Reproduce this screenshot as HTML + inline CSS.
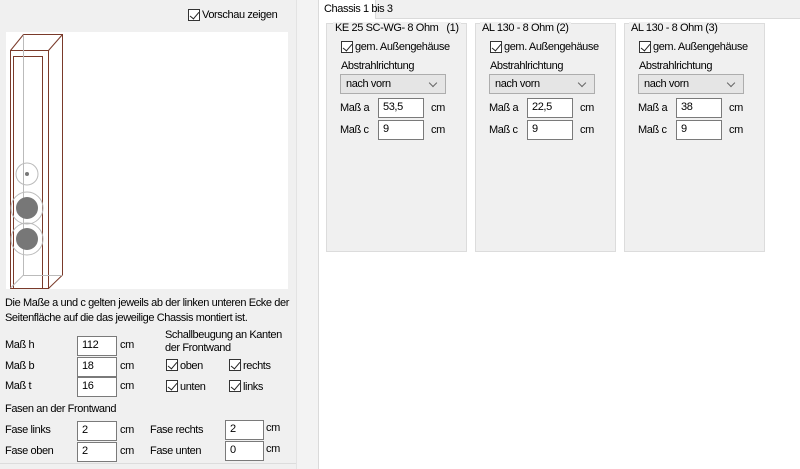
<!DOCTYPE html>
<html><head><meta charset="utf-8"><style>
body{margin:0;width:800px;height:469px;overflow:hidden;background:#fff;font-family:"Liberation Sans",sans-serif;font-size:11px;letter-spacing:-0.4px;color:#000;position:relative}
.a{position:absolute;white-space:nowrap}
.in{position:absolute;background:#fff;border:1px solid #7a7a7a;box-sizing:border-box;height:20px;padding:2px 0 0 4px}
.cb{position:absolute;width:12px;height:12px;border:1px solid #333;background:#fff;box-sizing:border-box}
.cb:after{content:"";position:absolute;left:3px;top:0px;width:4px;height:8px;border:solid #222;border-width:0 1.3px 1.3px 0;transform:rotate(40deg)}
.grp{position:absolute;top:23px;width:141px;height:229px;background:#f0f0f0;border:1px solid #dcdcdc;box-sizing:border-box}
.dd{position:absolute;left:13px;top:50px;width:106px;height:20px;background:#e5e5e5;border:1px solid #adadad;box-sizing:border-box;padding:3px 0 0 5px}
.dd:after{content:"";position:absolute;right:9px;top:5px;width:5px;height:5px;border:solid #666;border-width:0 1px 1px 0;transform:rotate(45deg)}
</style></head><body>
<div class="a" style="left:0;top:0;width:296px;height:469px;background:#f0f0f0;border-right:1px solid #e3e3e3"></div>
<div class="a" style="left:297px;top:0;width:21px;height:469px;background:#f3f3f3;border-right:1px solid #dadada"></div>
<div class="a" style="left:319px;top:0;width:481px;height:18px;background:#f0f0f0;border-bottom:1px solid #dadada"></div>
<div class="a" style="left:318px;top:0;width:58px;height:19px;background:#fff;border:1px solid #dadada;border-top:none;border-bottom:none;padding:3px 0 0 5px;box-sizing:border-box">Chassis 1 bis 3</div>

<div class="cb" style="left:188px;top:9px"></div><div class="a" style="left:202px;top:9px">Vorschau zeigen</div>
<div class="a" style="left:6px;top:32px;width:282px;height:257px;background:#fff"></div>
<svg class="a" style="left:0;top:0" width="80" height="300">
<g fill="none" stroke="#7a3a2a" stroke-width="1">
<rect x="10.5" y="50.5" width="38" height="238"/>
<line x1="13.5" y1="56" x2="13.5" y2="289"/><line x1="42.5" y1="56" x2="42.5" y2="289"/>
<line x1="13" y1="56.5" x2="42" y2="56.5"/>
<line x1="10.5" y1="50.5" x2="23.5" y2="34.5"/><line x1="48.5" y1="50.5" x2="62.5" y2="34.5"/>
<line x1="23.5" y1="34.5" x2="62.5" y2="34.5"/><line x1="62.5" y1="34" x2="62.5" y2="275"/>
<line x1="48.5" y1="288.5" x2="62.5" y2="275"/>
</g>
<g fill="none" stroke="#bbb" stroke-width="1">
<line x1="23.5" y1="35" x2="23.5" y2="275"/><line x1="23" y1="275.5" x2="62" y2="275.5"/><line x1="10.5" y1="288" x2="23.5" y2="275"/>
<circle cx="27" cy="174" r="11"/><circle cx="27" cy="208" r="16"/><circle cx="27" cy="239" r="16"/>
</g>
<circle cx="27" cy="174" r="2" fill="#777"/><circle cx="27" cy="208" r="11" fill="#777"/><circle cx="27" cy="239" r="11" fill="#777"/>
</svg>
<div class="a" style="left:5px;top:296px;line-height:15px">Die Maße a und c gelten jeweils ab der linken unteren Ecke der<br>Seitenfläche auf die das jeweilige Chassis montiert ist.</div>
<div class="a" style="left:5px;top:339px">Maß h</div><div class="in" style="left:77px;top:336px;width:40px">112</div><div class="a" style="left:120px;top:339px">cm</div>
<div class="a" style="left:5px;top:360px">Maß b</div><div class="in" style="left:77px;top:357px;width:40px">18</div><div class="a" style="left:120px;top:360px">cm</div>
<div class="a" style="left:5px;top:380px">Maß t</div><div class="in" style="left:77px;top:377px;width:40px">16</div><div class="a" style="left:120px;top:380px">cm</div>
<div class="a" style="left:165px;top:329px;line-height:13px">Schallbeugung an Kanten<br>der Frontwand</div>
<div class="cb" style="left:166px;top:359px"></div><div class="a" style="left:180px;top:360px">oben</div>
<div class="cb" style="left:229px;top:359px"></div><div class="a" style="left:243px;top:360px">rechts</div>
<div class="cb" style="left:166px;top:380px"></div><div class="a" style="left:180px;top:381px">unten</div>
<div class="cb" style="left:229px;top:380px"></div><div class="a" style="left:243px;top:381px">links</div>
<div class="a" style="left:5px;top:403px">Fasen an der Frontwand</div>
<div class="a" style="left:5px;top:424px">Fase links</div><div class="in" style="left:77px;top:421px;width:40px">2</div><div class="a" style="left:120px;top:424px">cm</div>
<div class="a" style="left:150px;top:424px">Fase rechts</div><div class="in" style="left:225px;top:420px;width:39px">2</div><div class="a" style="left:266px;top:422px">cm</div>
<div class="a" style="left:5px;top:445px">Fase oben</div><div class="in" style="left:77px;top:442px;width:40px">2</div><div class="a" style="left:120px;top:445px">cm</div>
<div class="a" style="left:150px;top:445px">Fase unten</div><div class="in" style="left:225px;top:441px;width:39px">0</div><div class="a" style="left:266px;top:443px">cm</div>
<div class="a" style="left:0;top:463px;width:296px;height:1px;background:#dcdcdc"></div>

<div class="grp" style="left:326px">
<div class="a" style="left:6px;top:-2px;background:#f0f0f0;padding:0 2px">KE 25 SC-WG- 8 Ohm &nbsp;&nbsp;(1)</div>
<div class="cb" style="left:14px;top:17px"></div><div class="a" style="left:28px;top:17px">gem. Außengehäuse</div>
<div class="a" style="left:14px;top:36px">Abstrahlrichtung</div><div class="dd">nach vorn</div>
<div class="a" style="left:13px;top:78px">Maß a</div><div class="in" style="left:51px;top:74px;width:46px">53,5</div><div class="a" style="left:104px;top:78px">cm</div>
<div class="a" style="left:13px;top:100px">Maß c</div><div class="in" style="left:51px;top:96px;width:46px">9</div><div class="a" style="left:104px;top:100px">cm</div>
</div>
<div class="grp" style="left:475px">
<div class="a" style="left:4px;top:-2px;background:#f0f0f0;padding:0 2px">AL 130 - 8 Ohm (2)</div>
<div class="cb" style="left:14px;top:17px"></div><div class="a" style="left:28px;top:17px">gem. Außengehäuse</div>
<div class="a" style="left:14px;top:36px">Abstrahlrichtung</div><div class="dd">nach vorn</div>
<div class="a" style="left:13px;top:78px">Maß a</div><div class="in" style="left:51px;top:74px;width:46px">22,5</div><div class="a" style="left:104px;top:78px">cm</div>
<div class="a" style="left:13px;top:100px">Maß c</div><div class="in" style="left:51px;top:96px;width:46px">9</div><div class="a" style="left:104px;top:100px">cm</div>
</div>
<div class="grp" style="left:624px">
<div class="a" style="left:4px;top:-2px;background:#f0f0f0;padding:0 2px">AL 130 - 8 Ohm (3)</div>
<div class="cb" style="left:14px;top:17px"></div><div class="a" style="left:28px;top:17px">gem. Außengehäuse</div>
<div class="a" style="left:14px;top:36px">Abstrahlrichtung</div><div class="dd">nach vorn</div>
<div class="a" style="left:13px;top:78px">Maß a</div><div class="in" style="left:51px;top:74px;width:46px">38</div><div class="a" style="left:104px;top:78px">cm</div>
<div class="a" style="left:13px;top:100px">Maß c</div><div class="in" style="left:51px;top:96px;width:46px">9</div><div class="a" style="left:104px;top:100px">cm</div>
</div>
</body></html>
